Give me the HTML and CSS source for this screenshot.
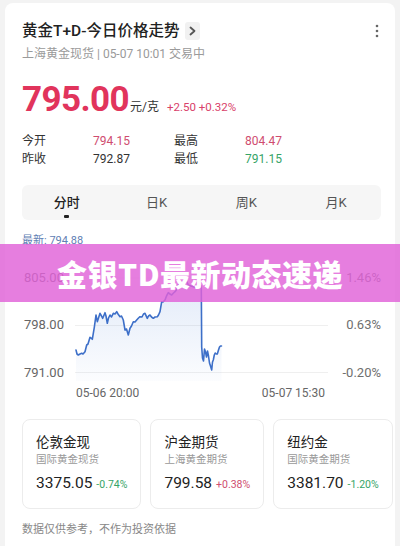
FILE: index.html
```html
<!DOCTYPE html>
<html lang="zh-CN">
<head>
<meta charset="utf-8">
<title>黄金T+D-今日价格走势</title>
<link rel="stylesheet" href="styles.css">
</head>
<body>
<div class="page">
  <div class="card">
    <div class="title-row">
      <span class="title">黄金T+D-今日价格走势</span>
      <span class="chev"><svg width="15" height="18" viewBox="0 0 15 18"><path d="M5.5 5.5 L9.5 9 L5.5 12.5" fill="none" stroke="#555" stroke-width="1.8" stroke-linecap="round" stroke-linejoin="round"/></svg></span>
      <span class="more"><svg width="4" height="14" viewBox="0 0 4 14"><circle cx="2" cy="2" r="1.3" fill="#666"/><circle cx="2" cy="7" r="1.3" fill="#666"/><circle cx="2" cy="12" r="1.3" fill="#666"/></svg></span>
    </div>
    <div class="sub">上海黄金现货 | 05-07 10:01 交易中</div>

    <div class="price-row">
      <span class="price">795.00</span>
      <span class="unit">元/克</span>
      <span class="chg">+2.50 +0.32%</span>
    </div>

    <div class="stats">
      <span class="lbl">今开</span><span class="up">794.15</span>
      <span class="lbl">最高</span><span class="up">804.47</span>
      <span class="lbl">昨收</span><span class="flat">792.87</span>
      <span class="lbl">最低</span><span class="down">791.15</span>
    </div>

    <div class="tabs">
      <div class="tab active"><span>分时</span><i class="dash"></i></div>
      <div class="tab"><span>日K</span></div>
      <div class="tab"><span>周K</span></div>
      <div class="tab"><span>月K</span></div>
    </div>

    <div class="latest">最新: 794.88</div>

    <div class="chart">
      <div class="ylab left"><span>805.00</span><span>798.00</span><span>791.00</span></div>
      <svg class="plot" width="265" height="119" viewBox="70 262 265 119">
        <defs>
          <linearGradient id="fillg" x1="0" y1="0" x2="0" y2="1">
            <stop offset="0" stop-color="#4a7fd6" stop-opacity="0.16"/>
            <stop offset="1" stop-color="#4a7fd6" stop-opacity="0.02"/>
          </linearGradient>
        </defs>
        <line x1="75" y1="278" x2="328" y2="278" stroke="#efefef" stroke-width="1"/>
        <line x1="75" y1="325.5" x2="328" y2="325.5" stroke="#efefef" stroke-width="1"/>
        <line x1="75" y1="372.5" x2="328" y2="372.5" stroke="#efefef" stroke-width="1"/>
        <path d="M76,350 L77,354 L78.3,355 L80,354 L81.7,353.3 L83,354 L85,351.7 L86.7,345 L88,344 L90,337.3 L91,338 L92.3,339.3 L94.3,327.3 L96,315 L97.3,321.7 L98.5,318 L100,313.3 L101.5,316 L102.7,318.3 L105,312.7 L106,316 L107.3,323.3 L108.5,318 L110,315 L111.5,317 L113.3,313.3 L115,314 L116.7,311.7 L118,314 L120,316.7 L121.5,316 L123.3,320 L125,330 L126.5,329 L128.3,335 L130,328.3 L131.5,326 L133.3,321.7 L135,322 L136.7,320 L138.5,318 L140,316.7 L142,317 L143.5,314 L145,313.3 L147.3,318.3 L148.5,316 L150,315 L151.5,317 L153.3,318.3 L155,317 L157.3,316.7 L158.5,315 L160,311.7 L161.7,301.7 L163,302 L165,300 L166.5,296 L168.3,292.7 L170,294 L171.7,295 L173.5,293 L175,291.7 L177,289 L178.3,285 L180.7,281.7 L183,282 L186,280 L188.3,285 L191,286 L194,287 L197,288.3 L199,286 L200.5,285 L201.3,286 L201.7,347 L202.5,358 L203.5,361 L204.5,349 L205.5,352 L206.5,357 L207.5,351 L208.5,356 L209.5,363 L210.5,366 L211.7,370 L212.5,362 L213.3,360 L214.3,355 L215.2,353 L216.3,354 L217.3,354 L218.5,350 L219.5,347 L220.5,346 L221.5,346 L221.5,381 L76,381 Z" fill="url(#fillg)" stroke="none"/>
        <path d="M76,350 L77,354 L78.3,355 L80,354 L81.7,353.3 L83,354 L85,351.7 L86.7,345 L88,344 L90,337.3 L91,338 L92.3,339.3 L94.3,327.3 L96,315 L97.3,321.7 L98.5,318 L100,313.3 L101.5,316 L102.7,318.3 L105,312.7 L106,316 L107.3,323.3 L108.5,318 L110,315 L111.5,317 L113.3,313.3 L115,314 L116.7,311.7 L118,314 L120,316.7 L121.5,316 L123.3,320 L125,330 L126.5,329 L128.3,335 L130,328.3 L131.5,326 L133.3,321.7 L135,322 L136.7,320 L138.5,318 L140,316.7 L142,317 L143.5,314 L145,313.3 L147.3,318.3 L148.5,316 L150,315 L151.5,317 L153.3,318.3 L155,317 L157.3,316.7 L158.5,315 L160,311.7 L161.7,301.7 L163,302 L165,300 L166.5,296 L168.3,292.7 L170,294 L171.7,295 L173.5,293 L175,291.7 L177,289 L178.3,285 L180.7,281.7 L183,282 L186,280 L188.3,285 L191,286 L194,287 L197,288.3 L199,286 L200.5,285 L201.3,286 L201.7,347 L202.5,358 L203.5,361 L204.5,349 L205.5,352 L206.5,357 L207.5,351 L208.5,356 L209.5,363 L210.5,366 L211.7,370 L212.5,362 L213.3,360 L214.3,355 L215.2,353 L216.3,354 L217.3,354 L218.5,350 L219.5,347 L220.5,346 L221.5,346" fill="none" stroke="#3d6fc8" stroke-width="1.6" stroke-linejoin="round" stroke-linecap="round"/>
      </svg>
      <div class="ylab right"><span>1.46%</span><span>0.63%</span><span>-0.20%</span></div>
      <div class="xlab"><span>05-06 20:00</span><span>05-07 15:30</span></div>
    </div>

    <div class="quotes">
      <div class="quote">
        <div class="q-name">伦敦金现</div>
        <div class="q-sub">国际黄金现货</div>
        <div class="q-val"><span class="num">3375.05</span><span class="pct down">-0.74%</span></div>
      </div>
      <div class="quote">
        <div class="q-name">沪金期货</div>
        <div class="q-sub">上海黄金期货</div>
        <div class="q-val"><span class="num">799.58</span><span class="pct up">+0.38%</span></div>
      </div>
      <div class="quote">
        <div class="q-name">纽约金</div>
        <div class="q-sub">国际黄金期货</div>
        <div class="q-val"><span class="num">3381.70</span><span class="pct down">-1.20%</span></div>
      </div>
    </div>

    <div class="note">数据仅供参考，不作为投资依据</div>
  </div>

  <div class="banner">金银TD最新动态速递</div>
</div>
</body>
</html>
```

FILE: styles.css
```css
* { box-sizing: border-box; }

html, body {
  margin: 0;
  padding: 0;
}

body {
  background: #f3f3f3;
  font-family: Roboto, "Noto Sans CJK SC", sans-serif;
  color: #222;
  overflow: hidden;
}

.page {
  position: relative;
  width: 400px;
  height: 546px;
  padding: 3px 5px 0 5px;
}

.card {
  background: #fff;
  border-radius: 8px;
  padding: 17px 14px 20px 17px;
  height: 560px;
}

.title-row {
  display: flex;
  align-items: center;
  height: 22px;
}

.title {
  font-size: 15.5px;
  font-weight: 500;
  color: #222;
  line-height: 22px;
}

.chev {
  display: flex;
  width: 15px;
  height: 18px;
  margin-left: 6px;
  background: #f1f1f1;
  border-radius: 3px;
}

.more {
  display: flex;
  margin-left: auto;
  margin-right: 2px;
}

.sub {
  margin-top: 4px;
  font-size: 12px;
  line-height: 16px;
  color: #9a9a9a;
}

.price-row {
  display: flex;
  align-items: baseline;
  margin-top: 20px;
  height: 36px;
}

.price {
  font-size: 35px;
  line-height: 36px;
  font-weight: 700;
  color: #e1345c;
  letter-spacing: -0.6px;
}

.unit {
  margin-left: 1px;
  font-size: 12px;
  color: #333;
}

.chg {
  margin-left: 8px;
  font-size: 11.5px;
  color: #d9416a;
}

.stats {
  display: grid;
  grid-template-columns: 71px 81px 71px 1fr;
  margin-top: 14px;
  font-size: 12px;
  line-height: 18px;
}

.lbl { color: #333; }
.up { color: #cf4d6f; }
.down { color: #36a468; }
.flat { color: #333; }

.tabs {
  display: grid;
  grid-template-columns: repeat(4, 1fr);
  margin-top: 17px;
  height: 35px;
  background: #f6f6f6;
  border-radius: 6px;
  padding-top: 8.5px;
}

.tab {
  display: flex;
  flex-direction: column;
  align-items: center;
  font-size: 13px;
  line-height: 18px;
  color: #555;
}

.tab.active {
  color: #222;
  font-weight: 500;
}

.dash {
  display: block;
  width: 5px;
  height: 2.5px;
  margin-top: 3.5px;
  background: #222;
  border-radius: 1px;
}

.latest {
  margin-top: 14px;
  font-size: 11px;
  line-height: 14px;
  color: #5f80b4;
}

.chart {
  display: grid;
  grid-template-columns: 48px 265px 46px;
  row-gap: 4.5px;
  margin-top: 14px;
}

.ylab {
  display: flex;
  flex-direction: column;
  justify-content: space-between;
  padding-top: 9px;
  padding-bottom: 1.5px;
  font-size: 13px;
  line-height: 14px;
  color: #666;
}

.ylab.left { padding-left: 2px; }
.ylab.right { align-items: flex-end; color: #6f6f6f; }

.plot { display: block; }

.xlab {
  grid-column: 2;
  display: flex;
  justify-content: space-between;
  padding: 0 10px 0 6px;
  font-size: 12px;
  line-height: 14px;
  color: #666;
}

.quotes {
  display: flex;
  gap: 9px;
  margin-top: 19.5px;
  margin-right: -10px;
}

.quote {
  border: 1px solid #ececec;
  border-radius: 8px;
  padding: 12px 13px 12px 13px;
}

.q-name {
  font-size: 13.5px;
  line-height: 20px;
  color: #222;
}

.q-sub {
  margin-top: 1px;
  font-size: 10.5px;
  line-height: 14px;
  color: #999;
}

.q-val {
  display: flex;
  align-items: baseline;
  margin-top: 4.5px;
  line-height: 22px;
  white-space: nowrap;
}

.num {
  font-size: 15.5px;
  color: #222;
}

.pct {
  margin-left: 4px;
  font-size: 10.5px;
}

.note {
  margin-top: 13.5px;
  font-size: 11px;
  line-height: 16px;
  color: #888;
}

.banner {
  position: absolute;
  left: 0;
  right: 0;
  top: 244px;
  height: 58px;
  display: flex;
  align-items: center;
  justify-content: center;
  background: rgba(224, 98, 216, 0.82);
  color: #fff;
  font-family: "Noto Sans CJK SC", sans-serif;
  font-size: 30px;
  font-weight: 900;
  letter-spacing: 0.5px;
}
```
